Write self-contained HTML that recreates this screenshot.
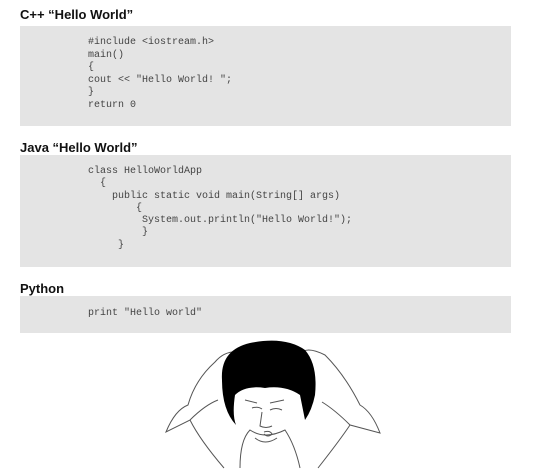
<!DOCTYPE html>
<html><head><style>
body{margin:0;width:553px;height:469px;background:#fff;position:relative;overflow:hidden}
.t{position:absolute;left:20px;font:bold 13px "Liberation Sans",sans-serif;color:#111}
.b{position:absolute;left:20px;width:491px;background:#e4e4e4}
pre{position:absolute;left:88px;margin:0;font:10px/12.5px "Liberation Mono",monospace;color:#444}
</style></head><body>
<div class="t" style="top:7px">C++ “Hello World”</div>
<div class="b" style="top:26px;height:100px"></div>
<pre style="top:37px">#include &lt;iostream.h&gt;
main()
{
cout &lt;&lt; "Hello World! ";
}
return 0</pre>
<div class="t" style="top:140px">Java “Hello World”</div>
<div class="b" style="top:155px;height:112px"></div>
<pre style="top:166px;line-height:12.3px">class HelloWorldApp
  {
    public static void main(String[] args)
        {
         System.out.println("Hello World!");
         }
     }</pre>
<div class="t" style="top:281px">Python</div>
<div class="b" style="top:296px;height:37px"></div>
<pre style="top:308px">print "Hello world"</pre>
<svg style="position:absolute;left:0;top:0" width="553" height="469" fill="none" stroke="#555" stroke-width="1">
<path d="M224 468 Q200 440 190 420 L166 432 Q175 410 188 405 Q195 380 215 362 Q225 350 240 352 M190 420 Q205 405 218 400"/>
<path d="M318 468 Q340 440 350 425 L380 433 Q372 412 360 405 Q345 375 325 355 Q305 345 300 355 M350 425 Q335 410 322 402"/>
<path d="M240 468 Q240 440 250 430 Q265 440 285 430 Q295 445 300 468"/>
<path fill="#000" stroke="none" d="M222 380 Q220 350 250 343 Q285 336 305 350 Q318 365 315 395 Q312 410 305 420 L300 395 Q285 385 265 388 Q245 385 235 395 Q232 415 236 425 Q222 410 222 380Z"/>
<path d="M245 400 l12 3 M270 403 l14 -3 M252 408 q6 -2 10 1 M270 410 q6 -3 12 0 M262 412 l-2 14 q6 3 12 0 M264 432 q6 -2 8 2 q-4 4 -8 0 M255 438 q10 8 22 0"/>
</svg>
</body></html>
